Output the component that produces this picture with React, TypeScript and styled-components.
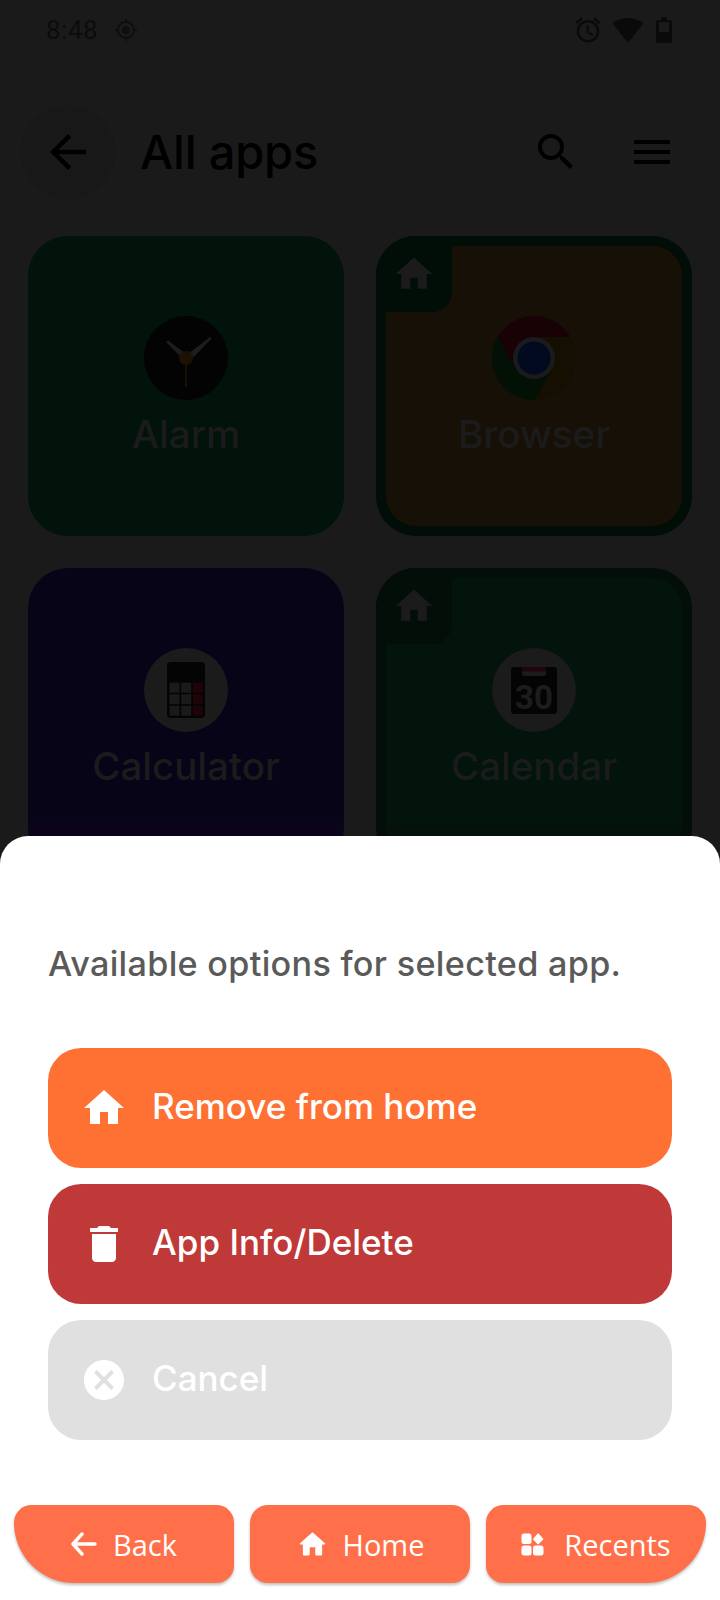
import React, { FC } from 'react';
import styled, { createGlobalStyle } from 'styled-components';
import { MdAccessAlarm, MdArrowBack, MdCancel, MdDelete, MdGpsFixed, MdHome, MdMenu, MdSearch, MdSignalWifi4Bar } from 'react-icons/md';

const GlobalStyle = createGlobalStyle`
	html, body {
		margin: 0;
		padding: 0;
		background: #1a1a1a;
	}
`;

const Screen = styled.div`
	position: relative;
	width: 720px;
	height: 1600px;
	overflow: hidden;
	background: #1a1a1a;
	font-family: 'Inter', 'Noto Sans', sans-serif;
`;

const StatusBar = styled.div`
	display: flex;
	align-items: center;
	justify-content: space-between;
	height: 60px;
	padding: 0 48px 0 46px;
	color: #0c0c0c;
`;

const StatusGroup = styled.div<{ $gap: number }>`
	display: flex;
	align-items: center;
	gap: ${props => props.$gap}px;
`;

const AlarmGlyph = styled(MdAccessAlarm)`
	margin-right: -3px;
`;

const Time = styled.span`
	font-family: 'Roboto', sans-serif;
	font-size: 26px;
	letter-spacing: 0.5px;
	color: #0c0c0c;
`;

const AppBar = styled.div`
	display: flex;
	align-items: center;
	height: 96px;
	margin-top: 44px;
	padding: 0 44px 0 21px;
	color: #000;
`;

const BackCircle = styled.div`
	display: flex;
	align-items: center;
	justify-content: center;
	width: 94px;
	height: 94px;
	border-radius: 50%;
	background: #181818;
`;

const Title = styled.h1`
	flex: 1;
	margin: 0 0 0 25px;
	font-size: 47px;
	line-height: 56px;
	font-weight: 500;
	letter-spacing: -0.2px;
	color: #000;
`;

const BarIcons = styled.div`
	display: flex;
	gap: 48px;
`;

const Grid = styled.div`
	display: grid;
	grid-template-columns: 316px 316px;
	gap: 32px;
	margin-top: 36px;
	padding: 0 28px;
`;

const Card = styled.div<{ $bg: string; $frame?: string }>`
	position: relative;
	display: flex;
	flex-direction: column;
	align-items: center;
	box-sizing: border-box;
	height: 300px;
	padding-top: ${props => (props.$frame ? 70 : 80)}px;
	border-radius: 40px;
	background: ${props => props.$bg};
	border: ${props => (props.$frame ? `10px solid ${props.$frame}` : 'none')};
`;

const HomeTab = styled.div<{ $color: string }>`
	position: absolute;
	top: -10px;
	left: -10px;
	display: flex;
	align-items: flex-start;
	justify-content: center;
	box-sizing: border-box;
	width: 76px;
	height: 76px;
	padding-top: 16px;
	border-radius: 40px 0 20px 0;
	background: ${props => props.$color};
	color: #1b1b1b;
`;

const AppIcon = styled.svg`
	display: block;
	width: 84px;
	height: 84px;
`;

const AppLabel = styled.div`
	margin-top: 11px;
	font-size: 38.5px;
	line-height: 46px;
	font-weight: 500;
	color: #1b1b1b;
`;

const Sheet = styled.div`
	position: absolute;
	top: 836px;
	left: 0;
	right: 0;
	bottom: 0;
	display: flex;
	flex-direction: column;
	box-sizing: border-box;
	padding: 106px 48px 0;
	border-radius: 28px 28px 0 0;
	background: #fff;
`;

const SheetTitle = styled.div`
	height: 106px;
	font-size: 34.2px;
	line-height: 44px;
	font-weight: 500;
	letter-spacing: 0.3px;
	color: #5a5a5a;
`;

const Options = styled.div`
	display: flex;
	flex-direction: column;
	gap: 16px;
`;

const OptionButton = styled.div<{ $bg: string }>`
	display: flex;
	align-items: center;
	gap: 24px;
	height: 120px;
	padding: 0 0 4px 32px;
	box-sizing: border-box;
	border-radius: 33px;
	background: ${props => props.$bg};
	color: #fff;
	font-size: 35px;
	font-weight: 500;

	svg {
		margin-top: 4px;
	}
`;

const Nav = styled.div`
	position: absolute;
	left: 14px;
	right: 14px;
	bottom: 17px;
	display: grid;
	grid-template-columns: repeat(3, 1fr);
	gap: 16px;
`;

const NavButton = styled.div<{ $radius: string; $gap: number }>`
	display: flex;
	align-items: center;
	justify-content: center;
	gap: ${props => props.$gap}px;
	height: 78px;
	border-radius: ${props => props.$radius};
	background: #ff704a;
	box-shadow: 0 2px 3px rgba(0, 0, 0, 0.25);
	color: #fff;
	font-family: 'Open Sans', sans-serif;
	font-size: 29px;
`;

const HomeGlyph: FC = () => (
	<svg width="33" height="33" viewBox="0 0 24 24" fill="#fff">
		<path d="M10 19v-5h4v5c0 .55.45 1 1 1h3c.55 0 1-.45 1-1v-7h1.7c.46 0 .68-.57.33-.87L12.67 3.6c-.38-.34-.96-.34-1.34 0l-8.36 7.53c-.34.3-.13.87.33.87H5v7c0 .55.45 1 1 1h3c.55 0 1-.45 1-1z" />
	</svg>
);

const BackGlyph: FC = () => (
	<svg width="26" height="24" viewBox="0 0 26 24" fill="none" stroke="#fff" strokeWidth="3.4" strokeLinecap="round" strokeLinejoin="round">
		<path d="M24 12H2M11 2 2 12l9 10" />
	</svg>
);

const RecentsGlyph: FC = () => (
	<svg width="23" height="23" viewBox="0 0 23 23" fill="#fff">
		<rect x="0.5" y="0.5" width="10" height="10.5" rx="2.5" />
		<path d="M16.4 0.8c.5-.4 1-.4 1.4 0l4.2 4.6c.4.4.4.9 0 1.3l-4.2 4.4c-.4.4-.9.4-1.4 0l-4-4.4c-.4-.4-.4-.9 0-1.3z" />
		<rect x="0.5" y="12.5" width="10" height="10" rx="2.5" />
		<rect x="12" y="12.5" width="10.5" height="10" rx="2.5" />
	</svg>
);

const BatteryGlyph: FC = () => (
	<svg width="16" height="26" viewBox="0 0 16 26">
		<path fill="#0a0a0a" d="M5 0h6v3h3a2 2 0 0 1 2 2v19a2 2 0 0 1-2 2H2a2 2 0 0 1-2-2V5a2 2 0 0 1 2-2h3z" />
		<rect x="3" y="5" width="10" height="10" fill="#1a1a1a" />
	</svg>
);

const AlarmIcon: FC = () => (
	<AppIcon viewBox="0 0 84 84">
		<circle cx="42" cy="42" r="42" fill="#030303" />
		<path d="M22.2 26.2l1.8-1.8L45 40l-4 5z" fill="#1d1d1d" />
		<path d="M66 21l1.6 1.6L45 46l-5-5z" fill="#1d1d1d" />
		<path d="M41.2 42h1.6v29h-1.6z" fill="#1f1404" />
		<circle cx="42" cy="42" r="7" fill="#1c1103" />
	</AppIcon>
);

const ChromeIcon: FC = () => (
	<AppIcon viewBox="0 0 84 84">
		<path d="M5.6 21A42 42 0 0 1 78.4 21L42 21 23.8 52.5z" fill="#180206" />
		<path d="M78.4 21A42 42 0 0 1 42 84L60.2 52.5 42 21z" fill="#140f01" />
		<path d="M42 84A42 42 0 0 1 5.6 21L23.8 52.5h36.4z" fill="#021005" />
		<circle cx="42" cy="42" r="21" fill="#1b1b1d" />
		<circle cx="42" cy="42" r="16.5" fill="#010a1e" />
	</AppIcon>
);

const CalculatorIcon: FC = () => {
	const cells = [0, 1, 2].flatMap(row => [0, 1, 2].map(col => ({ row, col })));
	return (
		<AppIcon viewBox="0 0 84 84">
			<circle cx="42" cy="42" r="42" fill="#1b1b1b" />
			<rect x="23" y="14" width="38" height="56" rx="4" fill="#040404" />
			{cells.map(({ row, col }) => (
				<rect key={`${row}-${col}`} x={25.5 + col * 11.7} y={34.7 + row * 11.5} width="10" height="10" fill={col === 2 ? '#1f0308' : '#1a1a1a'} />
			))}
		</AppIcon>
	);
};

const CalendarIcon: FC = () => (
	<AppIcon viewBox="0 0 84 84">
		<circle cx="42" cy="42" r="42" fill="#1b1b1b" />
		<rect x="19" y="19" width="46" height="47" rx="3" fill="#040404" />
		<path d="M30 19h24v6.5a2.5 2.5 0 0 1-2.5 2.5h-19a2.5 2.5 0 0 1-2.5-2.5z" fill="#1c1c1c" />
		<rect x="30" y="19" width="24" height="4.5" fill="#22050c" />
		<text x="42" y="61" textAnchor="middle" fontFamily="Roboto, sans-serif" fontWeight="700" fontSize="33" fill="#1c1c1c">30</text>
	</AppIcon>
);

const App: FC = () => {
	return <Screen>
		<GlobalStyle />
		<StatusBar>
			<StatusGroup $gap={16}>
				<Time>8:48</Time>
				<MdGpsFixed size={24} color="#0e0e0e" />
			</StatusGroup>
			<StatusGroup $gap={12}>
				<AlarmGlyph size={30} color="#0a0a0a" />
				<MdSignalWifi4Bar size={32} color="#0a0a0a" />
				<BatteryGlyph />
			</StatusGroup>
		</StatusBar>
		<AppBar>
			<BackCircle><MdArrowBack size={54} /></BackCircle>
			<Title>All apps</Title>
			<BarIcons>
				<MdSearch size={48} />
				<MdMenu size={48} />
			</BarIcons>
		</AppBar>
		<Grid>
			<Card $bg="#01130b">
				<AlarmIcon />
				<AppLabel>Alarm</AppLabel>
			</Card>
			<Card $bg="#171007" $frame="#010d07">
				<HomeTab $color="#010d07"><MdHome size={44} /></HomeTab>
				<ChromeIcon />
				<AppLabel>Browser</AppLabel>
			</Card>
			<Card $bg="linear-gradient(#070418 254px, #0b0319 256px)">
				<CalculatorIcon />
				<AppLabel>Calculator</AppLabel>
			</Card>
			<Card $bg="linear-gradient(#02140b 244px, #05120b 246px)" $frame="#020e07">
				<HomeTab $color="#020e07"><MdHome size={44} /></HomeTab>
				<CalendarIcon />
				<AppLabel>Calendar</AppLabel>
			</Card>
		</Grid>
		<Sheet>
			<SheetTitle>Available options for selected app.</SheetTitle>
			<Options>
				<OptionButton $bg="#ff7033"><MdHome size={48} />Remove from home</OptionButton>
				<OptionButton $bg="#bf3939"><MdDelete size={48} />App Info/Delete</OptionButton>
				<OptionButton $bg="#e0e0e0"><MdCancel size={48} />Cancel</OptionButton>
			</Options>
		</Sheet>
		<Nav>
			<NavButton $radius="18px 18px 18px 62px" $gap={16}><BackGlyph />Back</NavButton>
			<NavButton $radius="18px" $gap={14}><HomeGlyph />Home</NavButton>
			<NavButton $radius="18px 18px 62px 18px" $gap={20}><RecentsGlyph />Recents</NavButton>
		</Nav>
	</Screen>;
};

export default App;
